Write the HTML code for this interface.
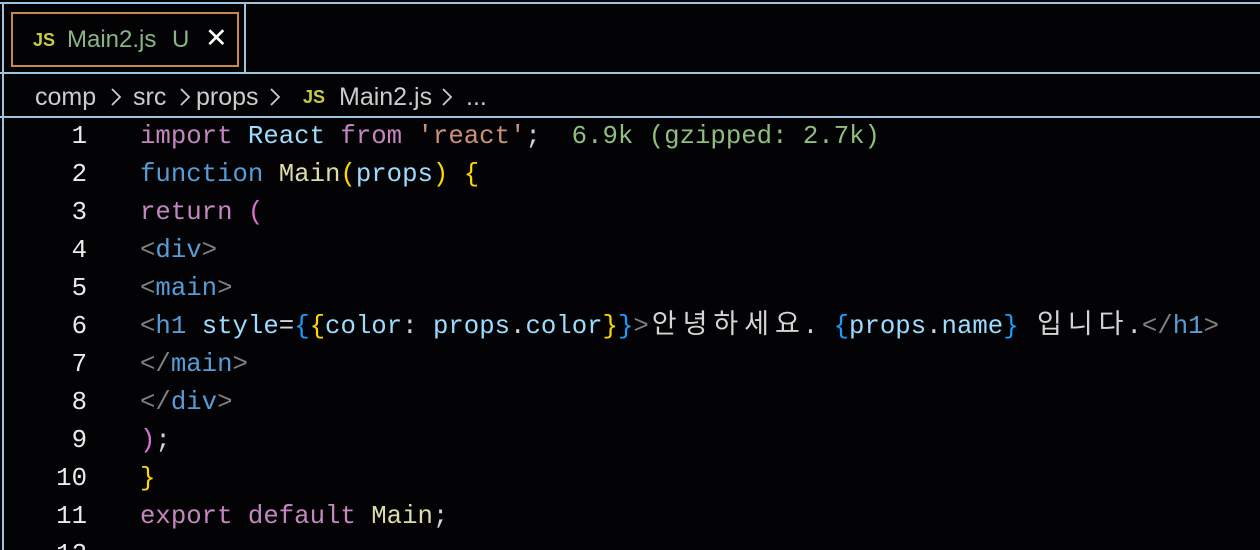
<!DOCTYPE html>
<html style="height:550px;overflow:hidden"><head><meta charset="utf-8"><style>
body{margin:0;width:1260px;height:550px;background:#030305;overflow:hidden;position:relative;font-family:"Liberation Sans","Noto Sans CJK KR",sans-serif}
.h{position:absolute;left:0;width:1260px;height:2px;background:#9fc3dc}
.v{position:absolute;width:2px;background:#9fc3dc}
.tab{position:absolute;left:11px;top:12px;width:224px;height:51px;border:2px solid #c8884a;box-sizing:content-box}
.tab span{position:absolute;top:12px;font-size:24px}
.js{color:#cbcb41!important;font-weight:bold;font-size:18px!important}
.bc span{position:absolute;top:83px;font-size:25px;color:#cccccc;white-space:pre}
.bc svg{position:absolute;top:87px}
.code{position:absolute;left:0;top:118px;font-family:"Liberation Mono","Noto Sans CJK KR",monospace;font-size:25.7px;line-height:38px;white-space:pre;color:#d4d4d4}
.ln{position:absolute;left:0;width:87px;text-align:right;color:#eaeaea}
.tx{position:absolute;left:140px}
.k{display:inline-block;width:30.8px;text-align:center;font-size:27px}
.p{color:#c586c0}.b{color:#569cd6}.l{color:#9cdcfe}.s{color:#ce9178}.y{color:#dcdcaa}.g{color:#8fbf7f}.gr{color:#808080}.Y{color:#ffd700}.P{color:#da70d6}.B{color:#179fff}
</style></head><body>
<div class="h" style="top:2px"></div>
<div class="h" style="top:72px"></div>
<div class="h" style="top:116px"></div>
<div class="v" style="left:2px;top:2px;height:548px"></div>
<div class="v" style="left:244px;top:2px;height:70px"></div>
<div class="tab">
<span class="js" style="left:20px;top:16px">JS</span>
<span style="left:54px;color:#89b48a">Main2.js</span>
<span style="left:159px;color:#89b48a">U</span>
<span style="left:192px;color:#fff;font-size:27px;top:9px">✕</span>
</div>
<div class="bc">
<span style="left:35px">comp</span>
<svg style="left:109px" width="14" height="20"><polyline points="3,2 11,10 3,18" fill="none" stroke="#ccc" stroke-width="1.8"/></svg>
<span style="left:133px">src</span>
<svg style="left:178px" width="14" height="20"><polyline points="3,2 11,10 3,18" fill="none" stroke="#ccc" stroke-width="1.8"/></svg>
<span style="left:196px">props</span>
<svg style="left:268px" width="14" height="20"><polyline points="3,2 11,10 3,18" fill="none" stroke="#ccc" stroke-width="1.8"/></svg>
<span class="js" style="left:303px;top:87px">JS</span>
<span style="left:339px">Main2.js</span>
<svg style="left:440px" width="14" height="20"><polyline points="3,2 11,10 3,18" fill="none" stroke="#ccc" stroke-width="1.8"/></svg>
<span style="left:466px">...</span>
</div>
<div class="code">
<div class="ln" style="top:0">1</div><div class="ln" style="top:38px">2</div><div class="ln" style="top:76px">3</div><div class="ln" style="top:114px">4</div><div class="ln" style="top:152px">5</div><div class="ln" style="top:190px">6</div><div class="ln" style="top:228px">7</div><div class="ln" style="top:266px">8</div><div class="ln" style="top:304px">9</div><div class="ln" style="top:342px">10</div><div class="ln" style="top:380px">11</div><div class="ln" style="top:418px">12</div>
<div class="tx" style="top:0"><span class="p">import</span> <span class="l">React</span> <span class="p">from</span> <span class="s">'react'</span>;  <span class="g">6.9k (gzipped: 2.7k)</span></div>
<div class="tx" style="top:38px"><span class="b">function</span> <span class="y">Main</span><span class="Y">(</span><span class="l">props</span><span class="Y">)</span> <span class="Y">{</span></div>
<div class="tx" style="top:76px"><span class="p">return</span> <span class="P">(</span></div>
<div class="tx" style="top:114px"><span class="gr">&lt;</span><span class="b">div</span><span class="gr">&gt;</span></div>
<div class="tx" style="top:152px"><span class="gr">&lt;</span><span class="b">main</span><span class="gr">&gt;</span></div>
<div class="tx" style="top:190px"><span class="gr">&lt;</span><span class="b">h1</span> <span class="l">style</span>=<span class="B">{</span><span class="Y">{</span><span class="l">color</span>: <span class="l">props</span>.<span class="l">color</span><span class="Y">}</span><span class="B">}</span><span class="gr">&gt;</span><span class="k">안</span><span class="k">녕</span><span class="k">하</span><span class="k">세</span><span class="k">요</span>. <span class="B">{</span><span class="l">props</span>.<span class="l">name</span><span class="B">}</span> <span class="k">입</span><span class="k">니</span><span class="k">다</span>.<span class="gr">&lt;/</span><span class="b">h1</span><span class="gr">&gt;</span></div>
<div class="tx" style="top:228px"><span class="gr">&lt;/</span><span class="b">main</span><span class="gr">&gt;</span></div>
<div class="tx" style="top:266px"><span class="gr">&lt;/</span><span class="b">div</span><span class="gr">&gt;</span></div>
<div class="tx" style="top:304px"><span class="P">)</span>;</div>
<div class="tx" style="top:342px"><span class="Y">}</span></div>
<div class="tx" style="top:380px"><span class="p">export</span> <span class="p">default</span> <span class="y">Main</span>;</div>
</div>
</body></html>
